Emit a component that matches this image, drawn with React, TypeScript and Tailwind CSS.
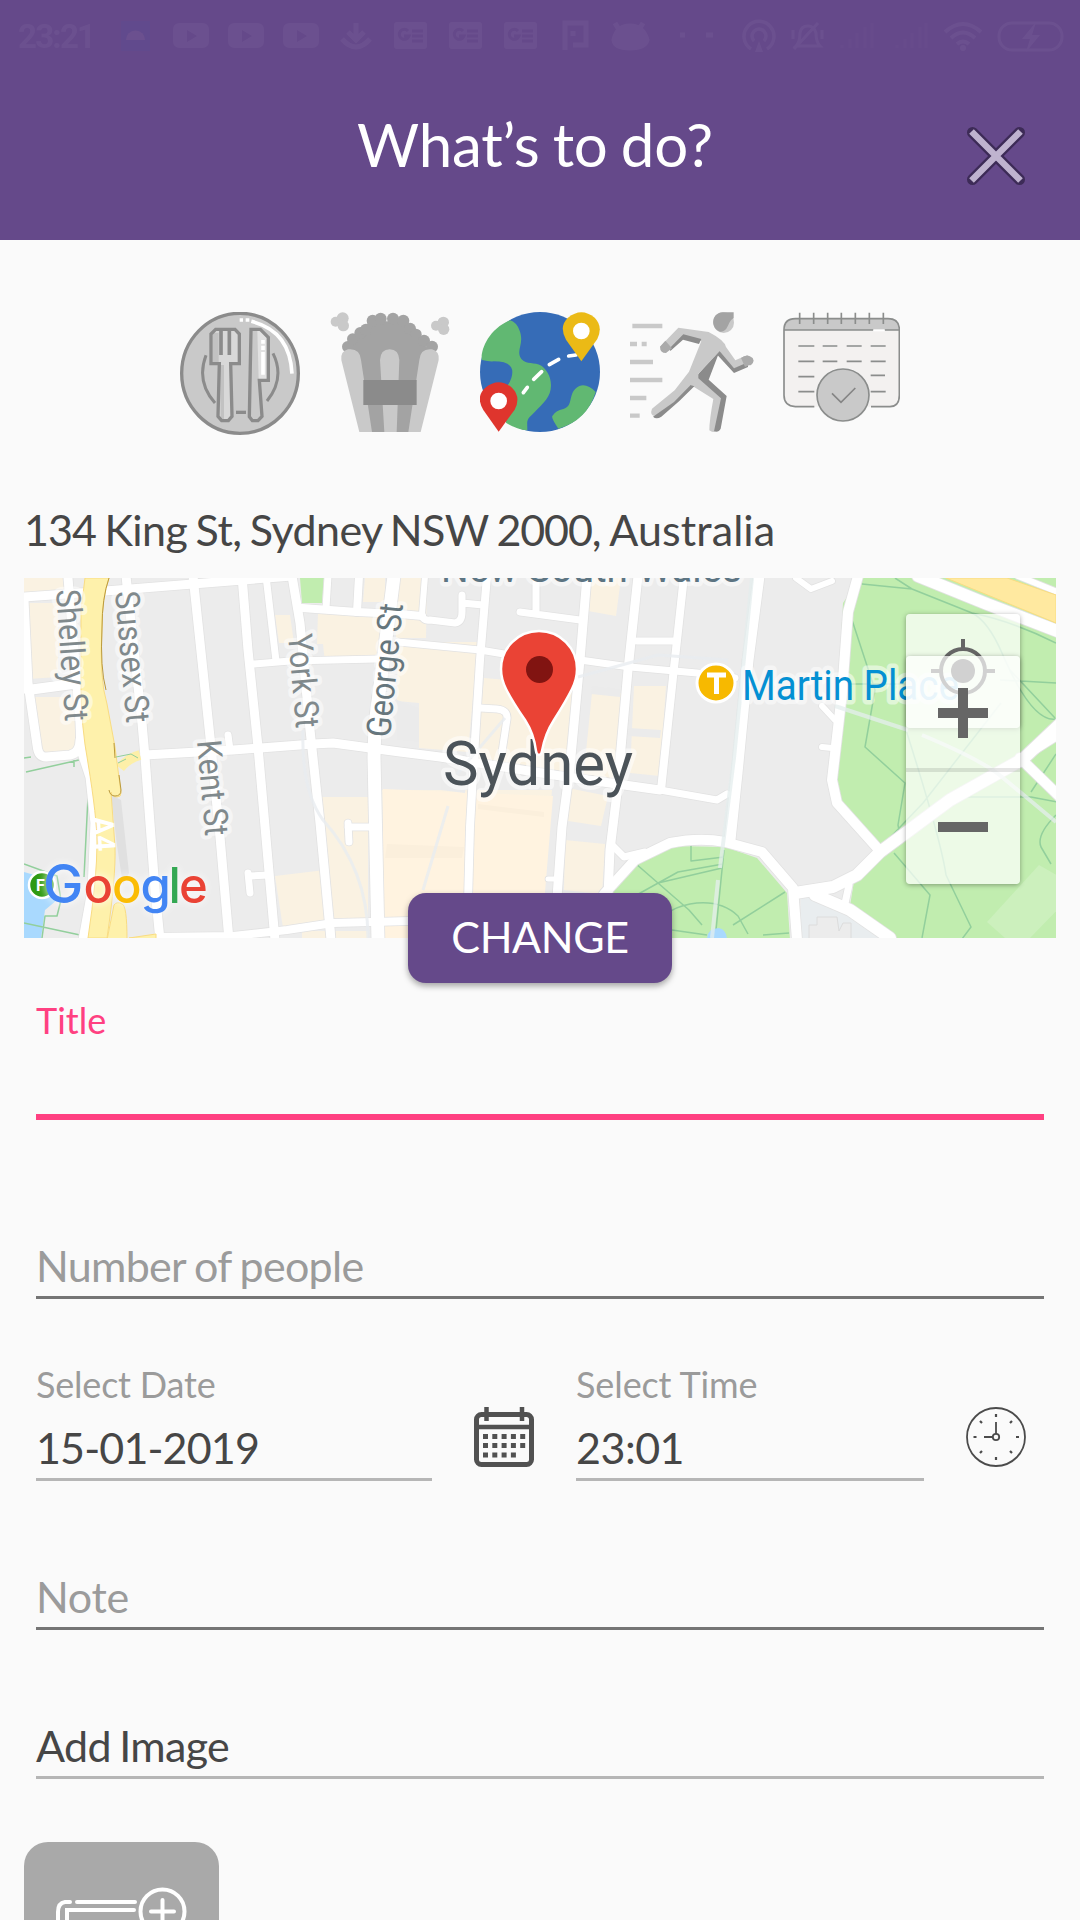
import React from "react";

function Svg({ box, className, children }: { box: string; className: string; children: React.ReactNode }) {
  return (
    <svg viewBox={box} className={className} fill="none" preserveAspectRatio="none">
      {children}
    </svg>
  );
}

function StatusBar() {
  return (
    <div className="h-18 w-full opacity-[0.04]">
      <svg viewBox="0 0 1080 72" className="h-18 w-full" fill="none" stroke="#fff" strokeWidth="5">
        <text x="18" y="48" fontSize="33" fontWeight="700" fontFamily="Roboto, sans-serif" fill="#fff" stroke="none" textLength="78">23:21</text>
        <rect x="121" y="21" width="29" height="30" fill="#1b6fd0" stroke="none" />
        <path d="M126 40a9.500 9.500 0 0 1 19 0z" fill="#fff" stroke="none" />
        {[173, 228, 283].map((x) => (
          <g key={x} stroke="none">
            <path fillRule="evenodd" fill="#fff" d={`M${x + 7} 23h22q7 0 7 7v11q0 7-7 7h-22q-7 0-7-7v-11q0-7 7-7zM${x + 14} 30v12l10-6z`} />
          </g>
        ))}
        <path d="M356 23v16M348 32l8 8 8-8M342 39q14 16 28 0" />
        {[394, 449, 504].map((x) => (
          <g key={x}>
            <rect x={x} y="22" width="33" height="27" rx="3" fill="#fff" stroke="none" />
            <path stroke="#65498a" strokeWidth="3" d={`M${x + 14} 31a5 5 0 1 0 1 5h-5M${x + 18} 31h11M${x + 18} 36h11M${x + 18} 41h11`} />
          </g>
        ))}
        <path d="M565 50V23h21v22h-13M573 31v5" />
        <path d="M614 40q3-14 16-14t17 14q-2 8-17 8t-16-8zM618 28l-3-5M640 28l3-5" fill="#fff" />
        <path d="M680 35h5M706 35h7" />
        <path d="M751 49a15 15 0 1 1 16 0M754 41a7 7 0 1 1 10 0" strokeWidth="3.500" />
        <path d="M759 41l-4 11h8z" fill="#fff" stroke="none" />
        <path strokeWidth="3" d="M796 46q4-4 4-13 1-7 8-7 6 0 8 7 0 9 4 13zM794 49l24-26M793 30v9M822 30v9" />
        <path strokeWidth="3" opacity=".3" d="M842 48v-3M850 48v-9M857 48V33M865 48V27M872 48V23M897 48v-3M905 48v-9M912 48V33M920 48V27M926 48V23" />
        <path strokeWidth="4" d="M945 32q18-16 36 0M951 38q12-11 24 0M957 44q6-5 12 0" />
        <circle cx="963" cy="48" r="3" fill="#fff" stroke="none" />
        <rect x="999" y="23" width="63" height="27" rx="13" strokeWidth="3" />
        <path d="M1036 22l-14 17h8l-4 13 14-17h-8z" fill="#fff" stroke="none" />
      </svg>
    </div>
  );
}

function DiningIcon() {
  return (
    <Svg box="30 36 360 372" className="h-31 w-30">
      <ellipse cx="210" cy="220" rx="175" ry="180" fill="#c9c9c9" stroke="#8b8b8b" strokeWidth="10" />
      <path d="M209 60h10M227 60h11" stroke="#fff" strokeWidth="11" />
      <path d="M244 64Q360 92 366 221" stroke="#fff" strokeWidth="11" />
      <path d="M108 166Q78 245 135 309M309 160Q346 234 291 303" stroke="#8b8b8b" strokeWidth="9" />
      <path d="M137 88h58l13 14v89h-26l4 158-11 13h-20l-11-13 4-158h-25v-89z" fill="#d8d8d8" />
      <path d="M128 98h18v94h-18zM150 195h12v165h-10z" fill="#c2c2c2" />
      <path d="M137 88h58l13 14v89h-26l4 158-11 13h-20l-11-13 4-158h-25v-89z" stroke="#8b8b8b" strokeWidth="10" />
      <path d="M153 90v75M178 90v75" stroke="#8b8b8b" strokeWidth="11" />
      <path d="M243 88h28l24 24v129h-27l8 108-12 13h-17l-9-12z" fill="#c9c9c9" />
      <path d="M262 92h10l18 22v123h-24z" fill="#e1e1e1" />
      <path d="M243 88h28l24 24v129h-27l8 108-12 13h-17l-9-12z" stroke="#8b8b8b" strokeWidth="10" />
      <path d="M279 120v11M279 137v13M279 156v68" stroke="#fff" strokeWidth="11" />
      <path d="M198 337h30" stroke="#8b8b8b" strokeWidth="10" />
    </Svg>
  );
}

function PopcornIcon() {
  return (
    <Svg box="480 36 360 372" className="h-31 w-30">
      <g fill="#c9c9c9">
        <circle cx="497" cy="65" r="15" /><circle cx="518" cy="55" r="18" /><circle cx="520" cy="77" r="17" />
        <circle cx="798" cy="77" r="15" /><circle cx="820" cy="67" r="17" /><circle cx="821" cy="88" r="17" />
      </g>
      <g fill="#a3a3a3">
        <path d="M530 150L560 100 600 64h105l35 40 40 50-38 242H590z" />
        <circle cx="533" cy="140" r="17" /><circle cx="548" cy="117" r="17" /><circle cx="571" cy="99" r="18" />
        <circle cx="588" cy="89" r="18" /><circle cx="608" cy="62" r="18" /><circle cx="632" cy="56" r="18" />
        <circle cx="669" cy="56" r="18" /><circle cx="700" cy="62" r="18" /><circle cx="720" cy="86" r="18" />
        <circle cx="738" cy="103" r="17" /><circle cx="762" cy="122" r="18" /><circle cx="786" cy="140" r="18" />
      </g>
      <path d="M514 180q-3-26 20-32 36-4 39 32l33 216h-38zM806 180q3-26-20-32-35-4-38 32l-33 216h37zM630 180q2-32 29-32t29 32l-8 216h-37z" fill="#c9c9c9" />
      <path d="M580 240h160v75H580z" fill="#8b8b8b" />
    </Svg>
  );
}

function TravelIcon() {
  return (
    <Svg box="60 36 360 372" className="h-31 w-30">
      <circle cx="240" cy="216" r="180" fill="#366cb7" />
      <path d="M150 61C80 90 60 160 66 180q20 5 35 4 56 0 56 32 0 20-14 40l-5 112q30 20 64 23c0-30-5-30 20-53 30-30 51-48 51-82 0-30-16-50-29-59-20-12-45-2-60-20-18-26 10-44-5-85q-10-26-29-31zM407 276q-26 86-112 110-22-32-18-38 10-17 33-21c34-10 10-50 48-69q24-8 49 18z" fill="#61b872" />
      <path d="M190 278l12-16M221 238l24-23M268 194l28-16M326 168l22-3" stroke="#fff" strokeWidth="11" strokeLinecap="round" />
      <path d="M364 184l-46-65q-22-40 6-66 40-33 80 0 26 26 8 64z" fill="#ebba16" />
      <circle cx="364" cy="93" r="25" fill="#fff" />
      <path d="M116 395l-46-65q-24-40 6-67 40-33 80 0 28 28 8 66z" fill="#df352d" />
      <circle cx="116" cy="303" r="25" fill="#fff" />
    </Svg>
  );
}

function RunnerIcon() {
  return (
    <Svg box="510 36 360 372" className="h-31 w-30 overflow-visible">
      <path d="M517 78h90M510 132h21M545 132h15M510 186h69M510 240h97M510 294h49M510 347h29" stroke="#c9c9c9" strokeWidth="13" />
      <path d="M600 140l55-57 91 13q48 25 52 45l28 40 36-16q18 8 16 24l-57 17-42-53-65 69 72 60q8 6 5 16l-21 93q-10 10-22 0 0-30 12-94l-66-41-46 48-62 44q-18-2-10-22l68-55 43-56 37-92-52-13-38 38q-25 8-31-8z" fill="#c9c9c9" />
      <path d="M631 153l38-34 48 13 7-15-54-14-41 42zM779 153l43 52 42-18v14l-42 18-49-53zM715 222l64-69-33 86 54 49-18 98q-6 12-20 8l21-99-68-60zM692 255l-50 51-63 44q10 10 25 0l54-47 45-44z" fill="#8b8b8b" />
      <path d="M600 140l16-18 20 23-18 14q-18 0-18-19zM843 174q18-14 35 0l3 8q-4 14-14 14l-12 5z" fill="#aaa" />
      <circle cx="791" cy="68" r="31" fill="#c9c9c9" />
      <path d="M821 37h-34c-35 3-36 50-6 58 25 2 22-34 40-40z" fill="#a3a3a3" />
    </Svg>
  );
}

function ScheduleIcon() {
  return (
    <Svg box="120 36 360 372" className="h-31 w-30">
      <rect x="132" y="56" width="346" height="264" rx="34" fill="#f3f1f0" />
      <path d="M132 90q0-34 34-34h278q34 0 34 34z" fill="#c9c9c9" />
      <path d="M223 320h-57q-34-2-34-34V90q0-34 34-34h278q34 0 34 34v196q0 34-28 34h-57M132 90h268M434 90h44" stroke="#8b8d8c" strokeWidth="5" />
      <path d="M400 91h34" stroke="#fff" strokeWidth="6" />
      <path d="M179 38v34M221 38v34M263 38v34M304 38v34M346 38v34M388 38v34M430 38v34" stroke="#8b8d8c" strokeWidth="5" />
      <path d="M175 138h48M248 138h44M320 138h45M392 138h45M175 184h48M248 184h44M320 184h45M392 184h45M175 230h48M392 226h43M175 275h48M392 275h45" stroke="#8b8d8c" strokeWidth="5" />
      <circle cx="309" cy="285" r="82" fill="#f8f8f8" />
      <circle cx="309" cy="285" r="78" fill="#c9c9c9" stroke="#8b8d8c" strokeWidth="5" />
      <path d="M276 280l27 27 43-43" stroke="#858585" strokeWidth="5" />
    </Svg>
  );
}

const ROADS: [number, string][] = [
  [9, "M24 597L80 593 193 584 292 576"],
  [9, "M68 578L80 723 81 750 90 777 95 823 92 890 83 940"],
  [9, "M24 600L28 683 37 745Q38 757 46 757L70 755Q80 753 80 740"],
  [10, "M28 690L80 683"],
  [9, "M126 576L142 723 145 757 155 890 160 940"],
  [9, "M193 576L210 737 220 837 229 940"],
  [9, "M242 576L248 650 258 747 275 940"],
  [7, "M266 576L276 661"],
  [7, "M254 664L290 661 377 659"],
  [9, "M292 576L300 623 310 730 320 823 331 940"],
  [13, "M394 576L388 623 375 725 374 757 378 940"],
  [9, "M145 755L233 750 313 744 333 743 370 748 400 752 440 757 567 777 660 790"],
  [7, "M660 790L717 800 727 794"],
  [8, "M302 608L357 612 400 614 422 616"],
  [7, "M328 576L326 608"],
  [8, "M359 576L357 612"],
  [7, "M228 735L230 750M348 823L349 842M348 827L370 827M248 873L250 893M250 876L268 875"],
  [8, "M157 937L233 936 287 930 333 923 410 921"],
  [6, "M331 925L332 940"],
  [7, "M422 616Q424 621 430 620L455 623Q462 622 462 612L462 595M462 603L483 605"],
  [6, "M425 576L422 614"],
  [7, "M398 642L480 650 504 654 580 660 630 667 697 673 735 678"],
  [8, "M487 576L480 660 475 740 470 827 467 940"],
  [9, "M587 576L580 660 570 767 562 827 554 940"],
  [9, "M638 576L628 670 617 793 610 850 606 940"],
  [8, "M684 576L673 677 661 790"],
  [7, "M536 576L536 611M520 612L580 620M637 641L675 641"],
  [7, "M480 708L497 709Q508 710 507 719L502 752"],
  [5, "M548 879L556 879"],
  [11, "M759 576L748 660 737 773 730 840"],
  [10, "M604 894L635 860 670 843Q700 837 725 842L762 852 793 888 797 940"],
  [7, "M613 846L624 857 645 852"],
  [10, "M858 576L848 612 842 693 832 780 837 803 880 851"],
  [12, "M795 893L833 887 857 875 880 852 950 800 1023 759 1060 724"],
  [10, "M1020 758L1060 797M1030 752L1060 733"],
  [12, "M815 895L850 910 890 938"],
  [7, "M849 885L844 908"],
  [12, "M918 576L987 604 1060 632"],
  [6, "M1018 576L1060 593M796 578L811 589 832 581M822 706L835 720M822 747L832 748"],
];

type Lbl = { x: number; y: number; a: number; len: number; size: number; fill: string; t: string };
const LABELS: Lbl[] = [
  { x: 56, y: 590, a: 86, len: 132, size: 34, fill: "#80898c", t: "Shelley St" },
  { x: 115, y: 592, a: 85, len: 132, size: 34, fill: "#80898c", t: "Sussex St" },
  { x: 288, y: 635, a: 85, len: 94, size: 34, fill: "#80898c", t: "York St" },
  { x: 197, y: 741, a: 85, len: 96, size: 34, fill: "#80898c", t: "Kent St" },
  { x: 390, y: 738, a: -84.5, len: 134, size: 34, fill: "#66767d", t: "George St" },
  { x: 441, y: 581.5, a: 0, len: 301, size: 41, fill: "#5c7482", t: "New South Wales" },
  { x: 742, y: 699.5, a: 0, len: 217, size: 42, fill: "#0490d3", t: "Martin Place" },
  { x: 443, y: 785, a: 0, len: 190, size: 62, fill: "#4b5359", t: "Sydney" },
];

function MapView() {
  return (
    <svg viewBox="24 578 1032 360" className="block h-[360px] w-full bg-[#ececec]" fill="none" strokeLinejoin="round">
      <g fill="#faf2e2">
        <path d="M24 578h43l2 12-45 5zM24 603h34v74l-30 2zM33 697h44v53l-34 5z" />
        <path d="M275 615h15l4 28h-15zM318 613h62v50h-55l-2-19h-6zM365 578h20v24h-22zM395 578h32l-1 60h-30zM398 642h80l-10 110-49-4v-45l-22-2z" />
        <path d="M484 678l92 8-10 86-90-14zM591 578h30l-5 38-28-5zM592 693h30l-9 92-30-4zM634 686h32l-6 90-30-3zM568 788l40 8-7 30-33-5zM565 840l40 4-3 50-38-4z" />
        <path d="M322 797h46v125l-85 6-8-52 50-6zM302 931h66v8h-66zM382 790h170l-12 148H385z" />
      </g>
      <path d="M383 789l170 7-12 144H383z" fill="#fff3e0" />
      <path d="M441 763l26 4-2 26-24-3zM397 700l22 8v34l-22-2zM629 728l32 2-1 8-32-2zM592 686l29 3-1 8-29-3z" fill="#ebebeb" />
      <path d="M387 844l77 3-2 11h-77zM478 804l66 8v5l-66-8z" fill="#fbefdc" />
      <path d="M300 578h24l-2 25h-20z" fill="#c1edaf" />
      <path d="M861 576H1060V940H894L850 906l4-25 28-30-45-50-5-22 6-86 5-90z" fill="#c1edaf" />
      <path d="M612 940v-57l33-25 30-12 50 1 32 11 30 35 3 47z" fill="#c1edaf" />
      <path d="M801 898l15-2 74 44h-89z" fill="#e9edef" />
      <path d="M809 940v-15h8v-8h20l2 14 4-8h8v17z" fill="#ececec" stroke="#dcdcdc" />
      <path d="M987 922l52-57 21 12v30l-30 31h-25z" fill="#ccf0bd" />
      <path d="M24 872l28 8 5 20-12 10-4 28H24z" fill="#a9d9fe" />
      <path d="M24 758l7-1M26 772l53-12M74 760v7M88 797l-4 80M24 864l33 12 4 24-4 16H45l-3 22M24 923l56 12" stroke="#92cf9c" strokeWidth="1.500" />
      <path d="M862 584l50 5 60 24q40 8 84 30M895 578l17 11M852 620l23 70-10 57 40 36-7 42 2 10M845 684h60M972 613q16 8 30 40 30 70 54 66M1000 680l56 3M1010 670l45 48M883 845l40-42 78-100M894 853l36 42-8 43M906 730q35 110 40 145l25 52-9 12M961 797h70l26 5M1031 792l25-38M1056 815q-20 20-15 32l10 17M635 863l54 47 13 15M633 897l45-25 45-8M658 883l64-15M691 845v16l33-4M660 930q0-20 30-26 30-5 48 12l10 18M724 850l-8 80M733 925l52-33M672 930l35 5M763 935l26-2" stroke="#92cf9c" strokeWidth="1.500" />
      <path d="M707 940q0-12 12-12 8 2 8 12z" fill="#a9d9fe" />
      <path d="M111 795l10 5 8 73-6 12-6-40z" fill="#e0e0e0" />
      <g stroke="#e2e2e2" strokeLinecap="round">
        {ROADS.map(([w, d], i) => <path key={i} d={d} strokeWidth={w + 1.6} />)}
      </g>
      <g stroke="#fff" strokeLinecap="round">
        {ROADS.map(([w, d], i) => <path key={i} d={d} strokeWidth={w} />)}
      </g>
      <path d="M120 768q8-10 20-13" stroke="#fdefa8" strokeWidth="10" />
      <path d="M85 578h24q-7 20-7 50-3 50 5 76l8 43 6 46q0 4-4 4-5 0-6-5l4 55q1 30-8 91H88q9-60 9-95 0-25-9-80-7-38-7-75v-78z" fill="#fef1ab" stroke="#f9dc82" />
      <path d="M109 578q-7 20-7 50-2 40 4 62M114 743l1 15M119 775l2 15q0 6-6 6-5 0-6-6" stroke="#bb9a3c" />
      <path d="M107 940l7-35q3-4 8-1 5 1 5 36zM129 938l27-4v5z" fill="#fef1ab" stroke="#f9dc82" />
      <path d="M116 757l15-3 7 4M118 763l8-4" stroke="#92cf9c" />
      <path d="M946 578h61l49 17v28z" fill="#ffe9a0" stroke="#f9dc82" />
      <path d="M303 730q-2 60 20 90 45 50 45 118M448 806l-25 84M505 718l-48 56M728 660l-70-5-80 22" stroke="#e9ecf0" strokeWidth="3" opacity=".8" />
      <path d="M752 578l-18 180-14 110M718 880l-6 58M835 706l73 24M922 735q60 25 80 42l54 45" stroke="#e4edee" strokeWidth="4" opacity=".75" />
      <circle cx="42" cy="885" r="13" fill="#2f9a12" stroke="#fff" strokeWidth="2.500" />
      <text x="36" y="891" fontSize="16" fontWeight="700" fontFamily="Roboto, sans-serif" fill="#fff">F</text>
      <text transform="translate(92 817) rotate(86)" fontSize="30" fontFamily="Roboto, sans-serif" fontWeight="700" fill="#fff" textLength="35" lengthAdjust="spacingAndGlyphs">A4</text>
      <g fontFamily="Roboto, sans-serif">
        {LABELS.map((l) => (
          <text
            key={l.t}
            transform={`translate(${l.x} ${l.y}) rotate(${l.a})`}
            fontSize={l.size}
            textLength={l.len}
            lengthAdjust="spacingAndGlyphs"
            fill={l.fill}
            stroke="#fff"
            strokeOpacity=".5"
            strokeWidth="9"
            paintOrder="stroke"
          >
            {l.t}
          </text>
        ))}
      </g>
      <circle cx="716" cy="683" r="19" fill="#f7b900" stroke="#fff" strokeWidth="3" />
      <path d="M707 675h19M716.500 674v20" stroke="#fff" strokeWidth="5" />
      <path d="M539 755q-2.500 0-3-4-2-17-11-31-13-19-19-31-5-10-5-20a38 38 0 0 1 76 0q0 10-5 20-6 12-18 31-9 14-12 31-.5 4-3 4z" fill="#ea4335" stroke="#fff" strokeWidth="2.500" />
      <circle cx="539.500" cy="669.500" r="13.500" fill="#811411" />
      <text y="902.500" fontSize="49" fontWeight="500" fontFamily="Inter, sans-serif" className="drop-shadow-[0_0_4px_#ffffff]">
        <tspan x="43" fontSize="54" fill="#4285f4">G</tspan><tspan x="83.500" fill="#ea4335">o</tspan><tspan x="112" fill="#fbbc05">o</tspan><tspan x="140.500" fill="#4285f4">g</tspan><tspan x="168.500" fill="#34a853">l</tspan><tspan x="179" fill="#ea4335">e</tspan>
      </text>
    </svg>
  );
}

function MapControls() {
  return (
    <div className="absolute top-9 right-9 h-[270px] w-[114px]">
      <div className="flex h-[114px] items-center justify-center rounded bg-white/70 shadow-[0_1px_5px_rgba(0,0,0,0.35)]">
        <svg viewBox="0 0 64 64" className="size-16" fill="none" stroke="#666" strokeWidth="4">
          <circle cx="32" cy="32" r="22" />
          <path d="M32 0v10M32 54v10M0 32h10M54 32h10" />
          <circle cx="32" cy="32" r="12" fill="#666" stroke="none" />
        </svg>
      </div>
      <div className="absolute inset-x-0 top-[42px] flex h-[228px] flex-col rounded bg-white/70 shadow-[0_1px_5px_rgba(0,0,0,0.35)]">
        <div className="flex h-[116px] items-center justify-center border-b-4 border-black/10 pt-0.5">
          <svg viewBox="0 0 50 50" className="size-[50px]" stroke="#666" strokeWidth="10"><path d="M0 25h50M25 0v50" /></svg>
        </div>
        <div className="flex h-28 items-center justify-center pb-0.5">
          <div className="h-2.5 w-[50px] bg-[#666]" />
        </div>
      </div>
    </div>
  );
}

function CalendarIcon() {
  return (
    <svg viewBox="0 0 60 60" className="size-15" fill="none" stroke="#515151" strokeWidth="5">
      <rect x="2.500" y="7.500" width="55" height="50" rx="5" />
      <path d="M2 20h56" strokeWidth="4.500" />
      <path d="M12.500 0v14M48 0v14" strokeWidth="4.500" />
      <path d="M9 29.500h43M9 38.500h43M9 48h33.500" strokeWidth="4.800" strokeDasharray="5 4.300" />
    </svg>
  );
}

function ClockIcon() {
  return (
    <svg viewBox="0 0 60 60" className="size-15" fill="none" stroke="#4b4b4b" strokeWidth="1.800">
      <circle cx="30" cy="30" r="29" />
      <circle cx="30" cy="30" r="3.200" />
      <path d="M30 27V15M26.500 30H18" />
      <path d="M30 7v3M30 50v3M7.500 30h3M50 30h3M14 14l2 2M44 16l2-2M14 46l2-2M44 44l2 2" strokeWidth="2.200" />
    </svg>
  );
}

export default function App() {
  return (
    <div className="h-[1920px] w-[1080px] overflow-hidden bg-[#fafafa] font-['Lato',sans-serif] text-[#464646]">
      <header className="flex h-60 flex-col bg-[#65498a]">
        <StatusBar />
        <div className="grid grid-cols-[1fr_auto_1fr] items-start">
          <span />
          <h1 className="-ml-2.5 pt-[42px] text-[60px] leading-[60px] tracking-[-0.2px] [word-spacing:-2px] text-white">What’s to do?</h1>
          <svg viewBox="0 0 60 60" className="mt-[54px] mr-[54px] size-15 justify-self-end">
            <path d="M6.500 6.500L53.500 53.500M53.500 6.500L6.500 53.500" stroke="#3d2b57" strokeWidth="11" strokeLinecap="round" />
            <path d="M5.500 5.500L54.500 54.500M54.500 5.500L5.500 54.500" stroke="#bfb3cf" strokeWidth="6.500" />
          </svg>
        </div>
      </header>

      <nav className="flex justify-center gap-7.5 pt-18">
        <DiningIcon />
        <PopcornIcon />
        <TravelIcon />
        <RunnerIcon />
        <ScheduleIcon />
      </nav>

      <p className="h-[142px] px-6 pt-[72px] text-[43px] leading-11 tracking-[-0.55px] [word-spacing:-2.2px] whitespace-nowrap">
        <span className="tracking-[-0.9px]">134</span> King St, Sydney NSW <span className="tracking-[-1.1px]">2000</span>, <span className="tracking-[0.1px]">Australia</span>
      </p>

      <section className="relative mx-6">
        <MapView />
        <MapControls />
        <button className="absolute -bottom-[45px] left-1/2 h-[90px] w-66 -translate-x-1/2 rounded-[18px] bg-[#65498a] pb-0.5 text-[43px] leading-11 tracking-[-0.4px] text-white shadow-[0_3px_6px_rgba(0,0,0,0.35)]">CHANGE</button>
      </section>

      <form className="px-9">
        <div className="h-[182px] border-b-6 border-[#ff4081] pt-[62px]">
          <label className="block text-[36px] leading-10 text-[#ff4081]">Title</label>
        </div>
        <div className="flex h-[179px] items-end border-b-3 border-[#757575] pb-[8px] text-[43px] leading-11 tracking-[-0.7px] [word-spacing:-1.5px] text-[#9b9b9b]">Number of people</div>
        <div className="flex h-[182px]">
          <div className="flex w-[396px] flex-col justify-between border-b-3 border-[#b6b6b6] pt-[65px] pb-[8px]">
            <label className="text-[36px] leading-10 tracking-[-0.2px] text-[#9b9b9b]">Select Date</label>
            <span className="text-[43px] leading-11 tracking-[-0.85px]">15-01-2019</span>
          </div>
          <div className="w-36 pt-[108px] pl-[42px]"><CalendarIcon /></div>
          <div className="flex w-[348px] flex-col justify-between border-b-3 border-[#b6b6b6] pt-[65px] pb-[8px]">
            <label className="text-[36px] leading-10 tracking-[-0.1px] text-[#9b9b9b]">Select Time</label>
            <span className="text-[43px] leading-11 tracking-[-0.5px]">23:01</span>
          </div>
          <div className="pt-[108px] pl-[42px]"><ClockIcon /></div>
        </div>
        <div className="flex h-[149px] items-end border-b-3 border-[#757575] pb-[8px] text-[43px] leading-11 tracking-[-0.3px] text-[#9b9b9b]">Note</div>
        <div className="flex h-[149px] items-end border-b-3 border-[#b6b6b6] pb-[8px] text-[43px] leading-11 tracking-[-0.65px] [word-spacing:-2px]">Add Image</div>
      </form>

      <div className="mt-[63px] ml-6 h-[195px] w-[195px] rounded-3xl bg-[#a9a9a9]">
        <svg viewBox="0 0 195 195" className="size-full" fill="none" stroke="#fff" strokeWidth="4" strokeLinecap="round">
          <path d="M46 60H41Q34 61 34 70V155h115V98M53 60h58M110 68H43V146h97V98" />
          <circle cx="138.500" cy="69.500" r="22" />
          <path d="M138.500 58v23M127 69.500h23" />
        </svg>
      </div>
    </div>
  );
}
